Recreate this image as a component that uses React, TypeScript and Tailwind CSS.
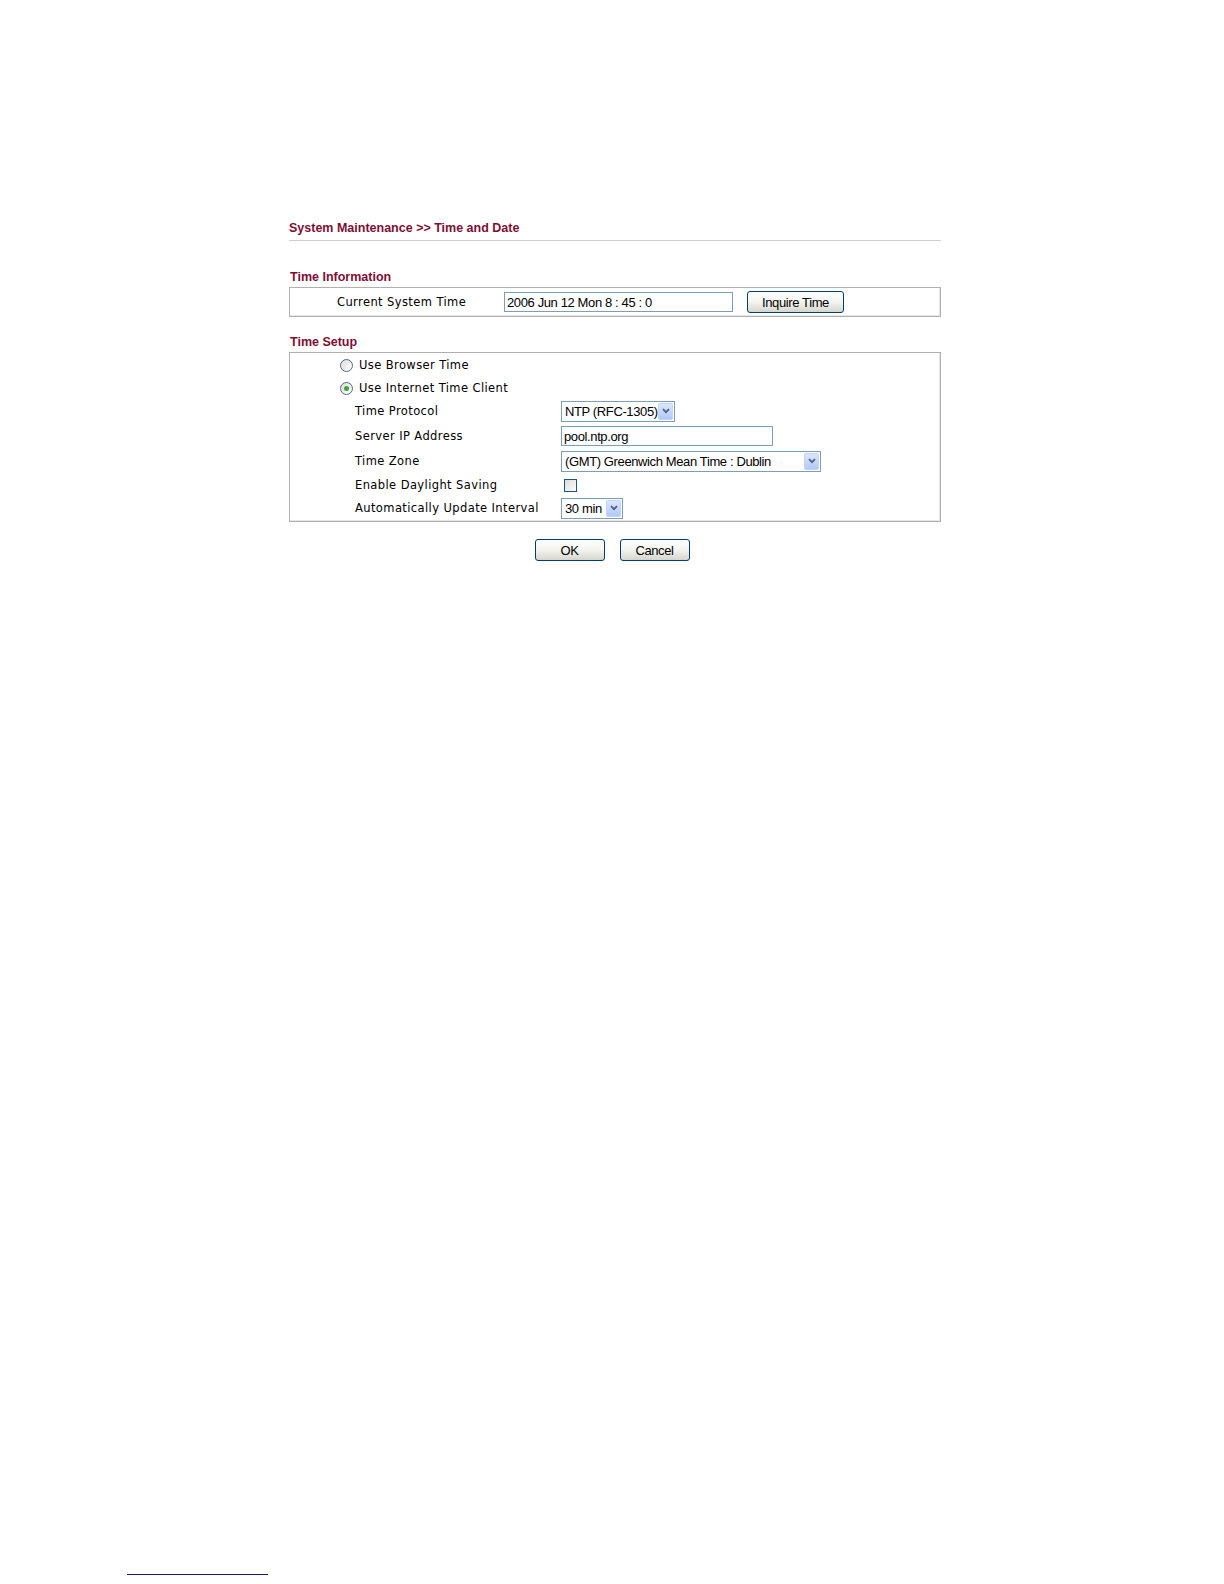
import React from "react"

const label = "font-['DejaVu_Sans',sans-serif] text-[11.5px] leading-[14px] text-black tracking-[0.4px]"
const field = "font-['Liberation_Sans',Arial,sans-serif] text-[13px] leading-[15px] tracking-[-0.38px] text-black"
const heading = "font-['Liberation_Sans',Arial,sans-serif] text-[12.5px] font-bold leading-[14px] text-[#7d0f35]"

function DropArrow() {
  return (
    <span className="flex h-[17px] w-[15px] items-center justify-center rounded-[2px] border border-[#c3d3fd] bg-gradient-to-b from-[#dbe6fd] to-[#b3c8f7]">
      <svg width="8" height="6" viewBox="0 0 8 6">
        <path d="M1 1.2 L4 4.2 L7 1.2" fill="none" stroke="#4d6185" strokeWidth="1.8" />
      </svg>
    </span>
  )
}

function Select({ value, width }: { value: string; width: string }) {
  return (
    <div className={`flex h-[21px] items-center justify-between border border-[#7f9db9] bg-white pl-[3px] pr-[1px] ${width}`}>
      <span className={field}>{value}</span>
      <DropArrow />
    </div>
  )
}

function XpButton({ children, width }: { children: React.ReactNode; width: string }) {
  return (
    <div className={`flex h-[22px] items-center justify-center rounded-[3px] border border-[#003c74] bg-gradient-to-b from-white via-[#f4f4f0] to-[#d6d5cc] ${width}`}>
      <span className={field}>{children}</span>
    </div>
  )
}

function Radio({ checked }: { checked?: boolean }) {
  return (
    <span className="flex h-[13px] w-[13px] items-center justify-center rounded-full border border-[#4e6a8c] bg-gradient-to-br from-[#dcdcd6] to-white">
      {checked && <span className="h-[5px] w-[5px] rounded-full bg-[#3aa53a]" />}
    </span>
  )
}

export default function App() {
  const rows = [
    { name: "Time Protocol", h: "h-[24px]", control: <Select value="NTP (RFC-1305)" width="w-[114px]" /> },
    {
      name: "Server IP Address",
      h: "h-[26px]",
      control: (
        <div className="flex h-[20px] w-[212px] items-center border border-[#7f9db9] bg-white pl-[2px]">
          <span className={field}>pool.ntp.org</span>
        </div>
      ),
    },
    { name: "Time Zone", h: "h-[24px]", control: <Select value="(GMT) Greenwich Mean Time : Dublin" width="w-[260px]" /> },
    {
      name: "Enable Daylight Saving",
      h: "h-[24px]",
      control: <span className="ml-[3px] block h-[13px] w-[13px] border border-[#1c5180] bg-gradient-to-br from-[#dcdcd7] to-[#fbfbf9]" />,
    },
    { name: "Automatically Update Interval", h: "h-[22px]", control: <Select value="30 min" width="w-[62px]" /> },
  ]

  return (
    <div className="relative h-screen w-full overflow-hidden bg-white">
      <div className="ml-[289px] w-[652px] pt-[221px]">
        <div className={`${heading} border-b border-[#cfcfcf] pb-[5px]`}>
          System Maintenance &gt;&gt; Time and Date
        </div>

        <div className={`${heading} mt-[29px] pl-[1px]`}>Time Information</div>
        <div className="mt-[3px] flex h-[30px] items-center border border-[#b0b0b0] shadow-[inset_-1px_-1px_0_#e6e6e6]">
          <span className={`${label} ml-[47px] w-[167px]`}>Current System Time</span>
          <div className="flex h-[20px] w-[229px] items-center border border-[#7f9db9] bg-white pl-[2px]">
            <span className={field}>2006 Jun 12 Mon 8 : 45 : 0</span>
          </div>
          <div className="ml-[14px]">
            <XpButton width="w-[97px]">Inquire Time</XpButton>
          </div>
        </div>

        <div className={`${heading} mt-[18px] pl-[1px]`}>Time Setup</div>
        <div className="mt-[3px] border border-[#b0b0b0] pb-[2px] shadow-[inset_-1px_-1px_0_#e6e6e6]">
          <div className="flex h-[24px] items-center pl-[50px]">
            <Radio />
            <span className={`${label} ml-[6px]`}>Use Browser Time</span>
          </div>
          <div className="flex h-[22px] items-center pl-[50px]">
            <Radio checked />
            <span className={`${label} ml-[6px]`}>Use Internet Time Client</span>
          </div>
          {rows.map((r) => (
            <div key={r.name} className={`flex items-center pl-[65px] ${r.h}`}>
              <span className={`${label} w-[206px]`}>{r.name}</span>
              {r.control}
            </div>
          ))}
        </div>

        <div className="mt-[17px] flex justify-center gap-[15px] pr-[6px]">
          <XpButton width="w-[70px]">OK</XpButton>
          <XpButton width="w-[70px]">Cancel</XpButton>
        </div>
      </div>

      <div className="absolute bottom-[9px] left-[127px] h-px w-[141px] bg-[#1a1a8c]" />
    </div>
  )
}
